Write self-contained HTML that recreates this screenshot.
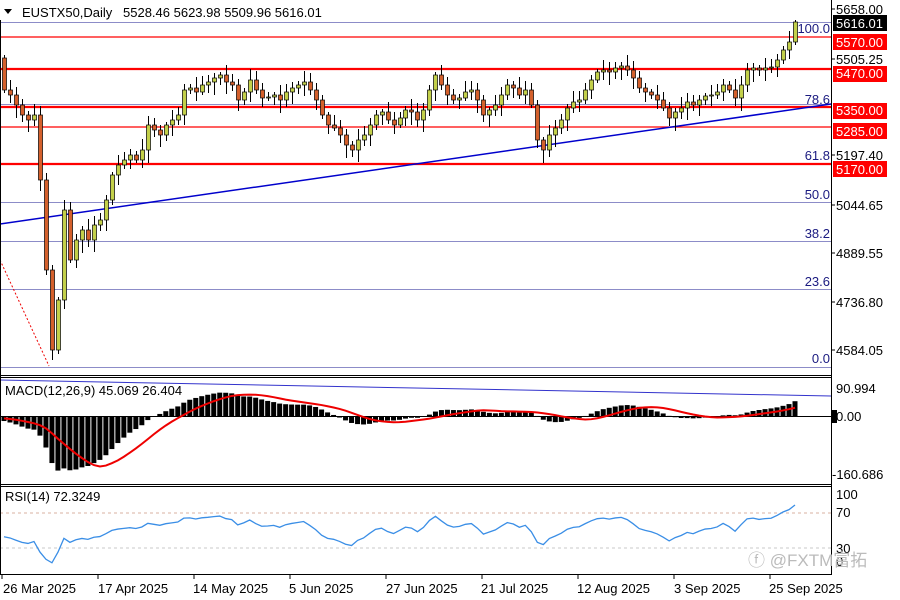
<!DOCTYPE html>
<html><head><meta charset="utf-8"><style>
html,body{margin:0;padding:0;background:#fff;}
svg{display:block;font-family:"Liberation Sans",sans-serif;}
</style></head><body>
<svg id="s" width="900" height="600" viewBox="0 0 900 600" xmlns="http://www.w3.org/2000/svg">
<rect width="900" height="600" fill="#fff"/>
<g id="grid"></g>
<g id="cand"></g>
<g id="macd"></g>
<g id="rsi"></g>
<g fill="none" stroke="#000" stroke-width="1">
<line x1="831.5" y1="0" x2="831.5" y2="575"/>
<line x1="0.5" y1="0" x2="0.5" y2="575"/>
<line x1="0" y1="375.5" x2="831" y2="375.5"/>
<line x1="0" y1="377.5" x2="831" y2="377.5"/>
<line x1="0" y1="484.5" x2="831" y2="484.5"/>
<line x1="0" y1="486.5" x2="831" y2="486.5"/>
<line x1="0" y1="574.5" x2="831" y2="574.5"/>
</g>
<rect x="0" y="0" width="831" height="20" fill="#fff"/>
<polygon points="4,9 12,9 8,14" fill="#000"/>
<text x="22" y="17" font-size="13">EUSTX50,Daily</text>
<text x="123" y="17" font-size="13">5528.46 5623.98 5509.96 5616.01</text>
<g font-size="13" fill="#1a1a80" text-anchor="end">
<text x="830" y="33">100.0</text>
<text x="830" y="104">78.6</text>
<text x="830" y="160">61.8</text>
<text x="830" y="199">50.0</text>
<text x="830" y="238">38.2</text>
<text x="830" y="286">23.6</text>
<text x="830" y="363">0.0</text>
</g>
<g font-size="13" fill="#000">
<text x="836" y="14">5658.00</text>
<text x="836" y="64">5505.25</text>
<text x="836" y="160">5197.40</text>
<text x="836" y="210">5044.65</text>
<text x="836" y="258">4889.55</text>
<text x="836" y="307">4736.80</text>
<text x="836" y="355">4584.05</text>
<text x="836" y="393">90.994</text>
<text x="836" y="421">0.00</text>
<text x="832" y="479">-160.686</text>
<text x="836" y="499">100</text>
<text x="836" y="517">70</text>
<text x="836" y="553">30</text>
<text x="836" y="566">0</text>
</g>
<g stroke="#000"><line x1="831" y1="9" x2="835" y2="9"/><line x1="831" y1="59" x2="835" y2="59"/><line x1="831" y1="155" x2="835" y2="155"/><line x1="831" y1="205" x2="835" y2="205"/><line x1="831" y1="253" x2="835" y2="253"/><line x1="831" y1="302" x2="835" y2="302"/><line x1="831" y1="350" x2="835" y2="350"/></g>
<rect x="833" y="15" width="54" height="16" fill="#000"/><text x="836" y="28" font-size="13" fill="#fff">5616.01</text>
<g font-size="13" fill="#fff">
<rect x="833" y="34" width="54" height="16" fill="#f00"/><text x="836" y="47">5570.00</text>
<rect x="833" y="66" width="54" height="16" fill="#f00"/><text x="836" y="78">5470.00</text>
<rect x="833" y="103" width="54" height="16" fill="#f00"/><text x="836" y="115">5350.00</text>
<rect x="833" y="123" width="54" height="16" fill="#f00"/><text x="836" y="136">5285.00</text>
<rect x="833" y="161" width="54" height="16" fill="#f00"/><text x="836" y="174">5170.00</text>
</g>
<rect x="831" y="410" width="6" height="13" fill="#000"/>
<text x="748" y="566" font-size="17" fill="#bbb">ⓕ @FXTM富拓</text>
<g font-size="13" fill="#000">
<text x="3" y="593">26 Mar 2025</text>
<text x="98" y="593">17 Apr 2025</text>
<text x="193" y="593">14 May 2025</text>
<text x="289" y="593">5 Jun 2025</text>
<text x="386" y="593">27 Jun 2025</text>
<text x="481" y="593">21 Jul 2025</text>
<text x="577" y="593">12 Aug 2025</text>
<text x="674" y="593">3 Sep 2025</text>
<text x="769" y="593">25 Sep 2025</text>
</g>
<g stroke="#000"><line x1="2" y1="575" x2="2" y2="579"/><line x1="98" y1="575" x2="98" y2="579"/><line x1="194" y1="575" x2="194" y2="579"/><line x1="290" y1="575" x2="290" y2="579"/><line x1="386" y1="575" x2="386" y2="579"/><line x1="482" y1="575" x2="482" y2="579"/><line x1="578" y1="575" x2="578" y2="579"/><line x1="674" y1="575" x2="674" y2="579"/><line x1="770" y1="575" x2="770" y2="579"/></g>
<text x="5" y="395" font-size="13">MACD(12,26,9) 45.069 26.404</text>
<text x="5" y="501" font-size="13">RSI(14) 72.3249</text>
</svg>
<script>
(function(){
var NS="http://www.w3.org/2000/svg";
function el(p,t,a){var e=document.createElementNS(NS,t);for(var k in a)e.setAttribute(k,a[k]);p.appendChild(e);return e;}
var G=document.getElementById('grid');
[22,104,163,202,241,289,367].forEach(function(l){el(G,'line',{x1:0,x2:831,y1:l+.5,y2:l+.5,stroke:'#8c8cc8'});});
[[37,1],[69,2],[107,2],[127,1],[164,2]].forEach(function(l){el(G,'line',{x1:0,x2:831,y1:l[0],y2:l[0],stroke:'#f00','stroke-width':l[1]+0.3});});
el(G,'line',{x1:0,y1:224,x2:831,y2:104,stroke:'#0000cc','stroke-width':1.5});
el(G,'line',{x1:0,y1:260,x2:49,y2:366,stroke:'#e00','stroke-dasharray':'2,2'});
el(G,'line',{x1:0,y1:380,x2:831,y2:396,stroke:'#3333cc'});
var ys=[90,95,105,115,120,115,180,270,350,300,210,260,240,230,240,225,220,200,175,165,160,155,160,150,125,130,135,125,120,115,90,88,92,85,82,78,75,82,85,100,92,80,90,98,97,95,100,92,88,85,82,90,100,115,125,128,135,145,150,140,135,125,115,112,120,125,118,110,112,120,110,90,75,85,95,100,98,92,90,100,115,110,105,95,85,88,95,90,105,140,150,135,128,120,108,102,100,90,80,72,70,72,68,66,70,78,88,92,95,100,108,118,112,108,102,105,100,96,95,92,85,90,98,85,70,68,70,68,67,60,50,42,22];
var n=ys.length,x0=4,dx=(795-x0)/(n-1);
var C=document.getElementById('cand');
var prev=58;
for(var i=0;i<n;i++){var o=prev,c=ys[i];var x=Math.round(x0+i*dx);var hi=Math.min(o,c)-3-((i*7)%9),lo=Math.max(o,c)+3+((i*5)%11);
el(C,'line',{x1:x+.5,x2:x+.5,y1:hi,y2:lo,stroke:'#000'});
var tp=Math.min(o,c),h=Math.max(Math.abs(o-c),1);
el(C,'rect',{x:x-1.5,y:tp,width:4,height:h,fill:c<o?'#c3d04a':'#d4602c',stroke:'#000','stroke-width':0.7});prev=c;}
var pr=[];for(var i=0;i<40;i++)pr.push(5616-(62+(i%2?6:-6)+ (i>30?(i-30)*1.5:0)-22)/0.32);
ys.forEach(function(y){pr.push(5616-(y-22)/0.32);});
function ema(a,p){var k=2/(p+1),r=[a[0]];for(var i=1;i<a.length;i++)r.push(a[i]*k+r[i-1]*(1-k));return r;}
var e12=ema(pr,12),e26=ema(pr,26),m=pr.map(function(v,i){return e12[i]-e26[i];});
var sg=m.map(function(v,i){var s=0,c=0;for(var j=Math.max(0,i-8);j<=i;j++){s+=m[j];c++;}return s/c;});
var M=document.getElementById('macd');
var sc=0.33,z=416,pts=[];
for(var i=0;i<n;i++){var v=m[i+40],x=x0+i*dx;var y=z-v*sc;el(M,'rect',{x:x-2.5,y:Math.min(y,z),width:5,height:Math.max(Math.abs(y-z),1),fill:'#000'});pts.push(x+','+(z-sg[i+40]*sc));}
el(M,'line',{x1:0,x2:831,y1:z+.5,y2:z+.5,stroke:'#000'});
el(M,'polyline',{points:pts.join(' '),fill:'none',stroke:'#e00','stroke-width':2});
var R=document.getElementById('rsi');
el(R,'line',{x1:0,x2:831,y1:513,y2:513,stroke:'#d8b0a0','stroke-dasharray':'3,3'});
el(R,'line',{x1:0,x2:831,y1:548,y2:548,stroke:'#c8c8c8','stroke-dasharray':'3,3'});
var ag=0,al=0,rp=[];for(var i=1;i<pr.length;i++){var d=pr[i]-pr[i-1];var g=d>0?d:0,l=d<0?-d:0;if(i<=14){ag+=g/14;al+=l/14;}else{ag=(ag*13+g)/14;al=(al*13+l)/14;}
if(i>=40){var rsi=al==0?100:100-100/(1+ag/al);var k=i-40;rp.push((x0+k*dx)+','+(574-rsi*0.875));}}
el(R,'polyline',{points:rp.join(' '),fill:'none',stroke:'#3a8ee6','stroke-width':1.3});
})();
</script>
</body></html>
